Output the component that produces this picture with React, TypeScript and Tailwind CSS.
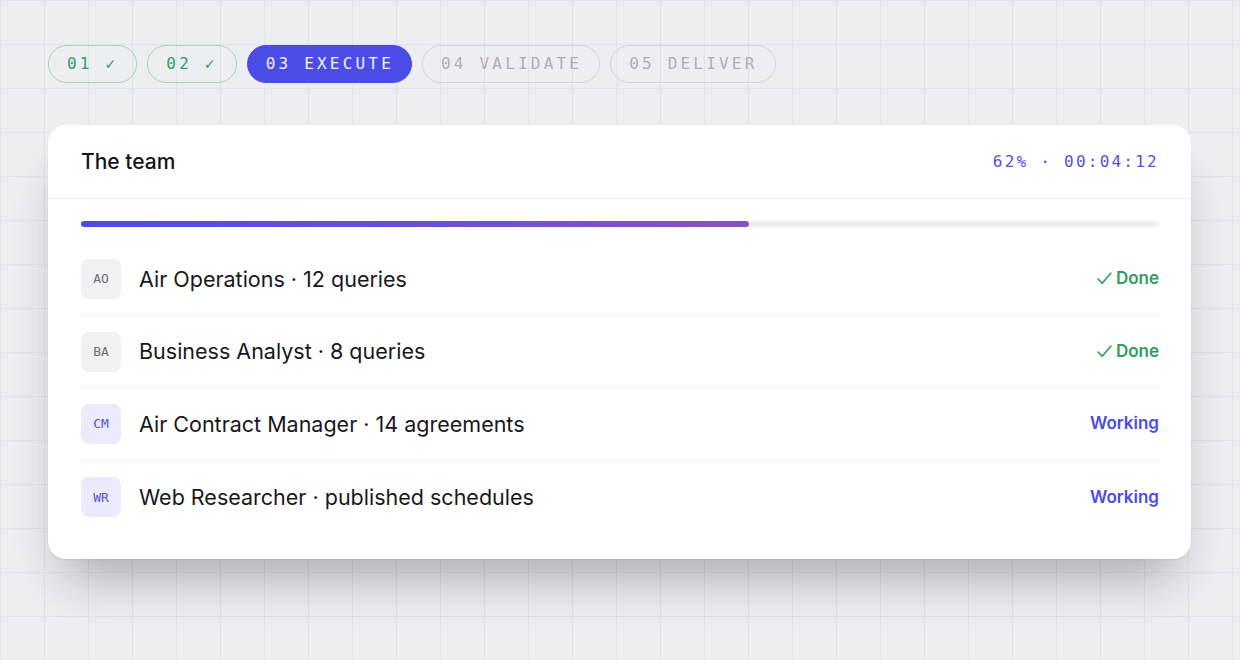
import React from 'react';

type Step = { label: string; state: 'done' | 'active' | 'todo' };

const steps: Step[] = [
  { label: '01 ✓', state: 'done' },
  { label: '02 ✓', state: 'done' },
  { label: '03 EXECUTE', state: 'active' },
  { label: '04 VALIDATE', state: 'todo' },
  { label: '05 DELIVER', state: 'todo' },
];

type Member = { code: string; name: string; detail: string; done: boolean };

const members: Member[] = [
  { code: 'AO', name: 'Air Operations', detail: '12 queries', done: true },
  { code: 'BA', name: 'Business Analyst', detail: '8 queries', done: true },
  { code: 'CM', name: 'Air Contract Manager', detail: '14 agreements', done: false },
  { code: 'WR', name: 'Web Researcher', detail: 'published schedules', done: false },
];

const mono = "font-['DejaVu_Sans_Mono',monospace]";

export default function App() {
  const progress = 62;

  return (
    <div
      className="min-h-[660px] w-full bg-[#edeef2] pl-12 pr-[49px] pt-[45px] font-['Inter',sans-serif]"
      style={{
        backgroundImage:
          'linear-gradient(to right, #e1e3e8 1px, transparent 1px), linear-gradient(to bottom, #e1e3e8 1px, transparent 1px)',
        backgroundSize: '44px 44px',
        backgroundPosition: '0 0',
      }}
    >
      {/* Stepper */}
      <div className="flex gap-[10px]">
        {steps.map(s => (
          <div
            key={s.label}
            className={
              s.state === 'done'
                ? `flex h-[38px] items-center rounded-full border border-[#a6d6bb] pl-[18px] pr-[18px] text-[16px] tracking-[0.2em] text-[#2f9e63] ${mono}`
                : s.state === 'active'
                ? `flex h-[38px] items-center rounded-full border border-[#4b4ce6] bg-[#4b4ce6] pl-[18px] pr-[17px] text-[16px] tracking-[0.2em] text-[#f1f1ff] ${mono}`
                : `flex h-[38px] items-center rounded-full border border-[#d3d4d9] pl-[18px] pr-[17px] text-[16px] tracking-[0.2em] text-[#adafb5] ${mono}`
            }
          >
            {s.label}
          </div>
        ))}
      </div>

      {/* Card */}
      <div className="mt-[42px] rounded-[18px] bg-white shadow-[0_34px_50px_-16px_rgba(30,32,40,0.32),0_1px_2px_rgba(0,0,0,0.06)]">
        <div className="flex h-[74px] items-center justify-between border-b border-[#ececef] pl-[33px] pr-[32px]">
          <div className="text-[21px] font-medium text-[#141416]">The team</div>
          <div className={`text-[16px] tracking-[0.14em] text-[#5552d9] ${mono}`}>
            {progress}% · 00:04:12
          </div>
        </div>

        <div className="pb-[25px] pl-[33px] pr-[32px] pt-[22px]">
          <div className="h-[6px] w-full rounded-full bg-[#efeff1]">
            <div
              className="h-full rounded-full bg-gradient-to-r from-[#4b4ce6] to-[#8a4fc0]"
              style={{ width: `${progress}%` }}
            />
          </div>

          <div className="mt-4">
            {members.map((m, i) => (
              <div
                key={m.code}
                className={`flex h-[72.7px] items-center ${i < members.length - 1 ? 'border-b border-[#efeff1]' : ''}`}
              >
                <div
                  className={
                    m.done
                      ? `flex h-10 w-10 items-center justify-center rounded-lg bg-[#f0f1f3] text-[13px] text-[#6b6d74] ${mono}`
                      : `flex h-10 w-10 items-center justify-center rounded-lg bg-[#ebebfd] text-[13px] text-[#5552d9] ${mono}`
                  }
                >
                  {m.code}
                </div>
                <div className="ml-[18px] flex-1 text-[21.5px] text-[#18181b]">
                  {m.name} · {m.detail}
                </div>
                {m.done ? (
                  <div className="flex items-center gap-[3px] text-[17px] font-semibold text-[#2f9e63]">
                    <svg width="17" height="17" viewBox="0 0 16 16" fill="none">
                      <path d="M2 8.5 L5.8 12.5 L14 3" stroke="#2f9e63" strokeWidth="1.6" strokeLinecap="round" strokeLinejoin="round" />
                    </svg>
                    Done
                  </div>
                ) : (
                  <div className="text-[17px] font-semibold text-[#4b4ce6]">Working</div>
                )}
              </div>
            ))}
          </div>
        </div>
      </div>
    </div>
  );
}
